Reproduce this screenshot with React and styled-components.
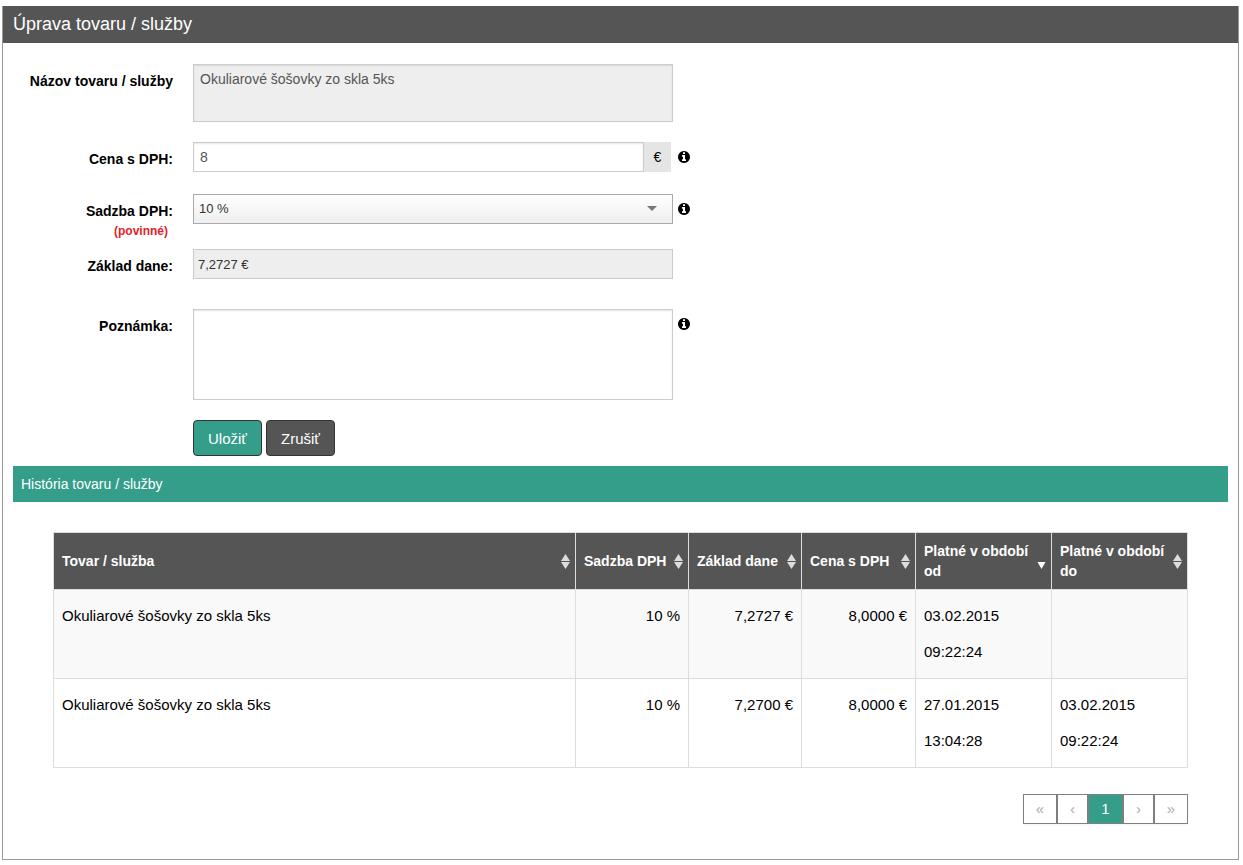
import React, { useState } from 'react';
import styled, { createGlobalStyle } from 'styled-components';

const GlobalStyle = createGlobalStyle`
  * {
    box-sizing: border-box;
  }
  body {
    margin: 6px 4px 5px 2px;
    background: #fff;
    color: #000;
    font-family: "Liberation Sans", Arial, sans-serif;
    font-size: 14px;
    line-height: 20px;
  }
  input, select, textarea, button {
    font-family: inherit;
    font-size: 14px;
    line-height: 20px;
    margin: 0;
  }
`

const Panel = styled.main`
  border: 1px solid #999;
  border-top: 0;
  padding-bottom: 35px;
`

const Title = styled.h1`
  margin: 0;
  padding: 8px 10px 9px;
  background: #555;
  color: #fff;
  font-size: 18px;
  font-weight: normal;
`

const Form = styled.form`
  padding: 21px 10px 10px 0;
`

const Row = styled.div`
  display: grid;
  grid-template-columns: 170px minmax(0, 480px) 12px;
  column-gap: 20px;
  align-items: start;
  margin-bottom: ${props => props.$gap || 20}px;
`

const Label = styled.label`
  padding-top: 7px;
  text-align: right;
  font-weight: bold;
`

const Required = styled.span`
  display: block;
  padding-right: 5px;
  color: #e0222a;
  font-size: 12px;
`

const Field = styled.div`
  display: flex;
  align-items: flex-start;
  grid-column: 2 / 4;
  gap: 5px;
`

const Control = styled.div`
  display: flex;
  flex: 0 1 480px;
  min-width: 0;
  position: relative;
`

const TextArea = styled.textarea`
  display: block;
  width: 100%;
  height: ${props => props.$height}px;
  padding: 4px 6px;
  border: 1px solid #ccc;
  border-radius: 0;
  background: ${props => props.readOnly ? '#eee' : '#fff'};
  box-shadow: inset 0 1px 2px rgba(0, 0, 0, 0.1);
  color: #555;
  resize: none;
  outline: none;
`

const Input = styled.input`
  flex: 1;
  min-width: 0;
  height: 30px;
  padding: 4px ${props => props.readOnly ? 4 : 6}px;
  border: 1px solid #ccc;
  border-radius: 0;
  background: ${props => props.readOnly ? '#eee' : '#fff'};
  box-shadow: ${props => props.readOnly ? 'none' : 'inset 0 1px 2px rgba(0, 0, 0, 0.1)'};
  color: ${props => props.readOnly ? '#333' : '#555'};
  font-size: ${props => props.readOnly ? 13 : 14}px;
  outline: none;
`

const Currency = styled.span`
  width: 27px;
  height: 30px;
  margin-right: 2px;
  background: #e5e5e5;
  line-height: 30px;
  text-align: center;
`

const Select = styled.select`
  appearance: none;
  width: 100%;
  height: 30px;
  padding: 0 30px 0 5px;
  border: 1px solid #aaa;
  border-radius: 0;
  background: linear-gradient(#fff, #eee);
  color: #333;
  font-size: 13px;
  outline: none;
`

const Arrow = styled.span`
  position: absolute;
  top: 12px;
  right: 16px;
  border: 5px solid transparent;
  border-top-color: #777;
  border-bottom: 0;
  pointer-events: none;
`

const InfoSvg = styled.svg`
  flex: none;
  width: 12px;
  height: 12px;
  margin-top: 9px;
`

const Buttons = styled.div`
  display: flex;
  gap: 4px;
  padding-left: 190px;
`

const Button = styled.button`
  height: 36px;
  padding: 2px 14px 0;
  border: 1px solid #333;
  border-radius: 4px;
  background: ${props => props.$primary ? '#349e8b' : '#555'};
  color: #fff;
  font-size: 15px;
  cursor: pointer;
`

const SectionTitle = styled.h2`
  margin: 0 10px;
  padding: 8px;
  background: #349e8b;
  color: #fff;
  font-size: 14px;
  font-weight: normal;
`

const History = styled.div`
  margin: 30px 50px 0;
`

const Table = styled.table`
  width: 100%;
  table-layout: fixed;
  border-collapse: collapse;
  font-size: 15px;
  line-height: 36px;
`

const Col = styled.col`
  width: ${props => props.$width ? `${props.$width}px` : 'auto'};
`

const Th = styled.th`
  height: 57px;
  padding: 0;
  border: 1px solid #ddd;
  background: #555;
`

const SortButton = styled.button`
  display: flex;
  align-items: center;
  justify-content: space-between;
  gap: 6px;
  width: 100%;
  padding: 8px 5px 8px 8px;
  border: 0;
  background: none;
  color: #fff;
  font-weight: bold;
  text-align: left;
  cursor: pointer;

  svg {
    flex: none;
  }
`

const Td = styled.td`
  height: 89px;
  padding: 8px;
  border: 1px solid #ddd;
  vertical-align: top;
  text-align: ${props => props.$right ? 'right' : 'left'};
`

const Tr = styled.tr`
  &:nth-child(odd) {
    background: #f9f9f9;
  }
`

const Pager = styled.nav`
  display: flex;
  justify-content: flex-end;
  margin-top: 26px;
`

const Page = styled.button`
  width: ${props => props.$width}px;
  height: 30px;
  padding: 0;
  border: 1px solid #808080;
  background: ${props => props.$active ? '#349e8b' : '#fff'};
  box-shadow: 0 1px 2px rgba(0, 0, 0, 0.05);
  color: ${props => props.$active ? '#fff' : '#aaa'};
  font-size: 15px;
`

const columns = [
  { title: 'Tovar / služba' },
  { title: 'Sadzba DPH', width: 113 },
  { title: 'Základ dane', width: 113 },
  { title: 'Cena s DPH', width: 114 },
  { title: 'Platné v období od', width: 136, sorted: true },
  { title: 'Platné v období do', width: 136 },
]

const rows = [
  ['Okuliarové šošovky zo skla 5ks', '10 %', '7,2727 €', '8,0000 €', '03.02.2015 09:22:24', ''],
  ['Okuliarové šošovky zo skla 5ks', '10 %', '7,2700 €', '8,0000 €', '27.01.2015 13:04:28', '03.02.2015 09:22:24'],
]

const pages = [
  { text: '«', width: 34, label: 'Prvá' },
  { text: '‹', width: 31, label: 'Predošlá' },
  { text: '1', width: 35, label: 'Strana 1', active: true },
  { text: '›', width: 31, label: 'Ďalšia' },
  { text: '»', width: 34, label: 'Posledná' },
]

const Info = () => (
  <InfoSvg viewBox="0 128 1536 1536" aria-hidden="true">
    <path d="M1024 1376v-160q0-14-9-23t-23-9h-96v-512q0-14-9-23t-23-9h-320q-14 0-23 9t-9 23v160q0 14 9 23t23 9h96v320h-96q-14 0-23 9t-9 23v160q0 14 9 23t23 9h448q14 0 23-9t9-23zm-128-896v-160q0-14-9-23t-23-9h-192q-14 0-23 9t-9 23v160q0 14 9 23t23 9h192q14 0 23-9t9-23zm640 416q0 209-103 385.5t-279.5 279.5-385.5 103-385.5-103-279.5-279.5-103-385.5 103-385.5 279.5-279.5 385.5-103 385.5 103 279.5 279.5 103 385.5z" />
  </InfoSvg>
)

const SortIcon = ({ sorted }) => (
  <svg width="9" height="15" viewBox="0 0 9 15" aria-hidden="true">
    {!sorted && <path d="M4.5 0L9 7H0z" fill="#ddd" />}
    {sorted
      ? <path d="M0.5 8h8L4.5 15z" fill="#fff" />
      : <path d="M0 8h9L4.5 15z" fill="#ddd" />}
  </svg>
)

const App = () => {
  const [price, setPrice] = useState('8')
  const [rate, setRate] = useState('10')
  const [note, setNote] = useState('')

  const handleSubmit = e => {
    e.preventDefault()
  }

  return (
    <>
      <GlobalStyle />
      <Panel>
        <Title>Úprava tovaru / služby</Title>
        <Form onSubmit={handleSubmit}>
          <Row>
            <Label htmlFor="name">Názov tovaru / služby</Label>
            <Field>
              <Control>
                <TextArea id="name" $height={58} readOnly value="Okuliarové šošovky zo skla 5ks" spellCheck={false} />
              </Control>
            </Field>
          </Row>
          <Row $gap={22}>
            <Label htmlFor="price">Cena s DPH:</Label>
            <Field>
              <Control>
                <Input id="price" type="text" value={price} onChange={e => setPrice(e.target.value)} />
                <Currency>€</Currency>
              </Control>
              <Info />
            </Field>
          </Row>
          <Row $gap={8}>
            <Label htmlFor="rate">
              Sadzba DPH:
              <Required>(povinné)</Required>
            </Label>
            <Field>
              <Control>
                <Select id="rate" value={rate} onChange={e => setRate(e.target.value)}>
                  <option value="10">10 %</option>
                  <option value="20">20 %</option>
                </Select>
                <Arrow />
              </Control>
              <Info />
            </Field>
          </Row>
          <Row $gap={30}>
            <Label htmlFor="base">Základ dane:</Label>
            <Field>
              <Control>
                <Input id="base" type="text" readOnly value="7,2727 €" />
              </Control>
            </Field>
          </Row>
          <Row>
            <Label htmlFor="note">Poznámka:</Label>
            <Field>
              <Control>
                <TextArea id="note" $height={91} value={note} onChange={e => setNote(e.target.value)} />
              </Control>
              <Info />
            </Field>
          </Row>
          <Buttons>
            <Button type="submit" $primary>Uložiť</Button>
            <Button type="button">Zrušiť</Button>
          </Buttons>
        </Form>

        <SectionTitle>História tovaru / služby</SectionTitle>
        <History>
          <Table>
            <colgroup>
              {columns.map(col => <Col key={col.title} $width={col.width} />)}
            </colgroup>
            <thead>
              <tr>
                {columns.map(col => (
                  <Th key={col.title} scope="col" aria-sort={col.sorted ? 'descending' : undefined}>
                    <SortButton type="button">
                      {col.title}
                      <SortIcon sorted={col.sorted} />
                    </SortButton>
                  </Th>
                ))}
              </tr>
            </thead>
            <tbody>
              {rows.map((row, i) => (
                <Tr key={i}>
                  {row.map((cell, j) => (
                    <Td key={j} $right={j > 0 && j < 4}>{cell}</Td>
                  ))}
                </Tr>
              ))}
            </tbody>
          </Table>
          <Pager aria-label="Stránkovanie">
            {pages.map(page => (
              <Page key={page.text} type="button" $width={page.width} $active={page.active} aria-label={page.label}>
                {page.text}
              </Page>
            ))}
          </Pager>
        </History>
      </Panel>
    </>
  );
};

export default App;
